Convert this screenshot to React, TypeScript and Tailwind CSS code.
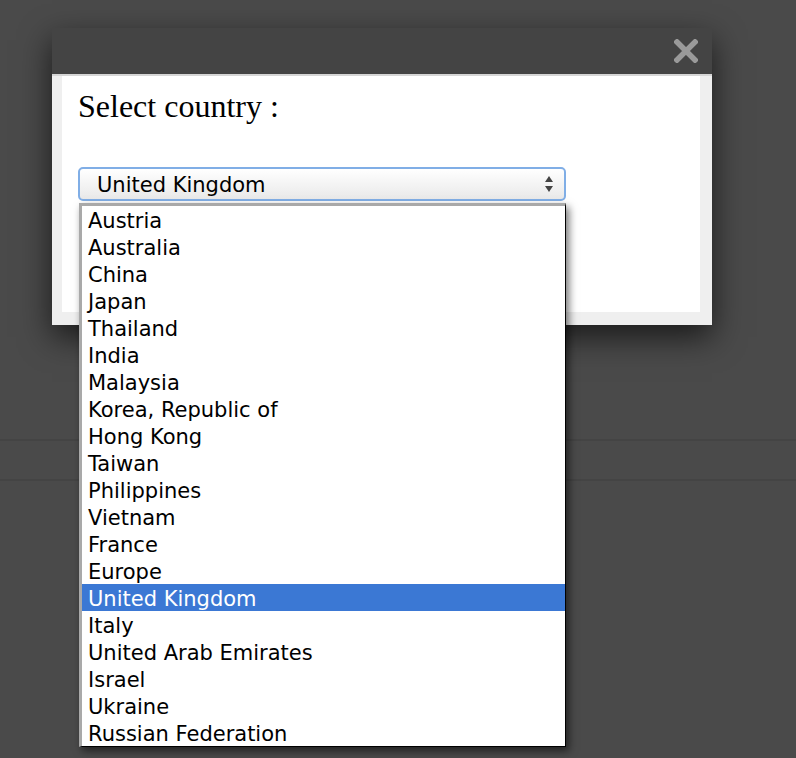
import { useState } from 'react';

const countries = [
  'Austria',
  'Australia',
  'China',
  'Japan',
  'Thailand',
  'India',
  'Malaysia',
  'Korea, Republic of',
  'Hong Kong',
  'Taiwan',
  'Philippines',
  'Vietnam',
  'France',
  'Europe',
  'United Kingdom',
  'Italy',
  'United Arab Emirates',
  'Israel',
  'Ukraine',
  'Russian Federation',
];

function CloseIcon() {
  return (
    <svg width="24" height="24" viewBox="0 0 24 24" className="text-[#9a9a9a]">
      <path d="M3 3 L21 21 M21 3 L3 21" stroke="currentColor" strokeWidth="5.5" strokeLinecap="square" />
    </svg>
  );
}

function SelectArrows() {
  return (
    <svg width="10" height="20" viewBox="0 0 10 20" className="text-[#444]">
      <path d="M5 2 L9 8 L1 8 Z" fill="currentColor" />
      <path d="M1 12 L9 12 L5 18 Z" fill="currentColor" />
    </svg>
  );
}

export default function App() {
  const [selected, setSelected] = useState('United Kingdom');

  return (
    <div className="relative w-full min-h-[758px] bg-[#4a4a4a] overflow-hidden">
      <div className="h-[441px] border-b-2 border-[#444]" />
      <div className="h-[40px] border-b-2 border-[#444]" />

      <div className="absolute left-[52px] top-[28px] w-[660px] shadow-[0_12px_30px_rgba(0,0,0,0.65)]">
        <div className="h-[46px] bg-[#444] flex items-center justify-end pr-[14px]">
          <CloseIcon />
        </div>
        <div className="bg-[#efefef] border-t-2 border-[#d6d6d6] pl-[10px] pr-[12px] pb-[13px]">
          <div className="bg-white h-[236px] pl-[16px] pt-[14px]">
            <h1 className="text-[32px] leading-none text-black font-['Liberation_Serif','Times_New_Roman',serif]">
              Select country :
            </h1>
            <div className="relative mt-[45px] w-[488px]">
              <div className="h-[34px] rounded-[5px] border-2 border-[#80aee6] bg-gradient-to-b from-white to-[#e9e9e9] flex items-center justify-between pl-[17px] pr-[10px] font-['DejaVu_Sans',sans-serif] text-[21px] text-black">
                <span className="pt-[3px]">{selected}</span>
                <SelectArrows />
              </div>
              <ul className="absolute left-[1px] top-[36px] w-[487px] h-[544px] overflow-hidden bg-white border-t-[3px] border-l-[3px] border-[#a9a9a9] border-r border-b border-r-black border-b-black shadow-[3px_4px_8px_rgba(0,0,0,0.55)] font-['DejaVu_Sans',sans-serif] text-[21px] z-10">
                {countries.map((c) => (
                  <li
                    key={c}
                    onClick={() => setSelected(c)}
                    className={`h-[27px] pt-[4px] leading-[23px] pl-[6px] whitespace-nowrap ${
                      c === selected ? 'bg-[#3b78d4] text-white' : 'text-black'
                    }`}
                  >
                    {c}
                  </li>
                ))}
              </ul>
            </div>
          </div>
        </div>
      </div>
    </div>
  );
}
